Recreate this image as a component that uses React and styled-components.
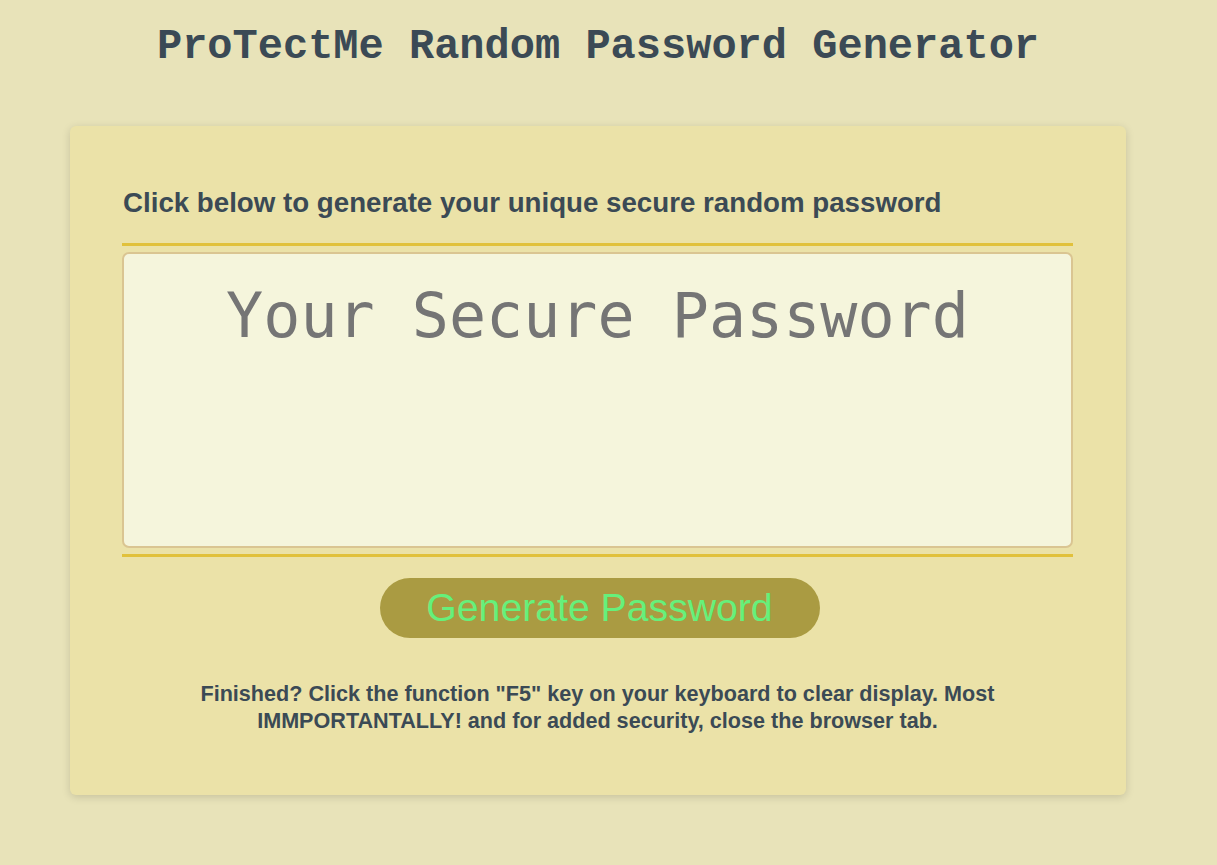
import React from "react";
import styled, { createGlobalStyle } from "styled-components";

const Global = createGlobalStyle`
  *, *::before, *::after { box-sizing: border-box; }
  html, body { margin: 0; padding: 0; }
  body {
    background: #e8e3b9;
    font-family: "Liberation Sans", Arial, sans-serif;
  }
`;

const Wrapper = styled.div`
  padding: 23px 21px 70px 0;
`;

const Header = styled.header`
  text-align: center;
  color: #3b4a55;
`;

const Title = styled.h1`
  margin: 0;
  font-family: "Liberation Mono", "Courier New", monospace;
  font-weight: 700;
  font-size: 42px;
  line-height: 48px;
`;

const Card = styled.main`
  width: 1056px;
  margin: 55px auto 0;
  background: #ebe2a8;
  border-radius: 6px;
  box-shadow: rgba(0, 0, 0, 0.15) 0 2px 8px 0;
  color: #3b4a55;
  padding: 61px 53px 61px 52px;
`;

const Rule = styled.div`
  height: 3px;
  background: #e1c13c;
`;

const CardHeader = styled.div`
  h2 {
    margin: 0 0 24px 1px;
    font-size: 27.7px;
    font-weight: 700;
    line-height: 32px;
  }
`;

const PasswordBox = styled.textarea`
  appearance: none;
  display: block;
  width: 100%;
  height: 296px;
  margin: 6px 0;
  padding: 26px 15px 15px;
  background: #f5f5dc;
  border: 2px solid #dac592;
  border-radius: 7px;
  resize: none;
  overflow: hidden;
  text-align: center;
  font-family: "DejaVu Sans Mono", monospace;
  font-size: 61.7px;
  color: #333;
  outline: none;

  &::placeholder {
    color: #757575;
  }
`;

const CardFooter = styled.div`
  text-align: center;
`;

const GenerateButton = styled.button`
  display: inline-flex;
  align-items: center;
  justify-content: center;
  width: 440px;
  height: 60px;
  margin: 21px 0 0 4px;
  padding: 0;
  border: none;
  border-radius: 30px;
  background: #aa9b42;
  color: #66f07b;
  font-family: "Liberation Sans", Arial, sans-serif;
  font-size: 39.2px;
  cursor: pointer;
`;

const Note = styled.p`
  margin: 42px auto 0;
  max-width: 860px;
  font-size: 21.6px;
  font-weight: 700;
  line-height: 27px;
`;

export default function App() {
  return (
    <>
      <Global />
      <Wrapper>
        <Header>
          <Title>ProTectMe Random Password Generator</Title>
        </Header>
        <Card>
          <CardHeader>
            <h2>Click below to generate your unique secure random password</h2>
            <Rule />
          </CardHeader>
          <PasswordBox readOnly placeholder="Your Secure Password" aria-label="Generated Password" />
          <CardFooter>
            <Rule />
            <GenerateButton type="button">Generate Password</GenerateButton>
            <Note>
              Finished? Click the function "F5" key on your keyboard to clear display. Most IMMPORTANTALLY! and for added security, close the browser tab.
            </Note>
          </CardFooter>
        </Card>
      </Wrapper>
    </>
  );
}
